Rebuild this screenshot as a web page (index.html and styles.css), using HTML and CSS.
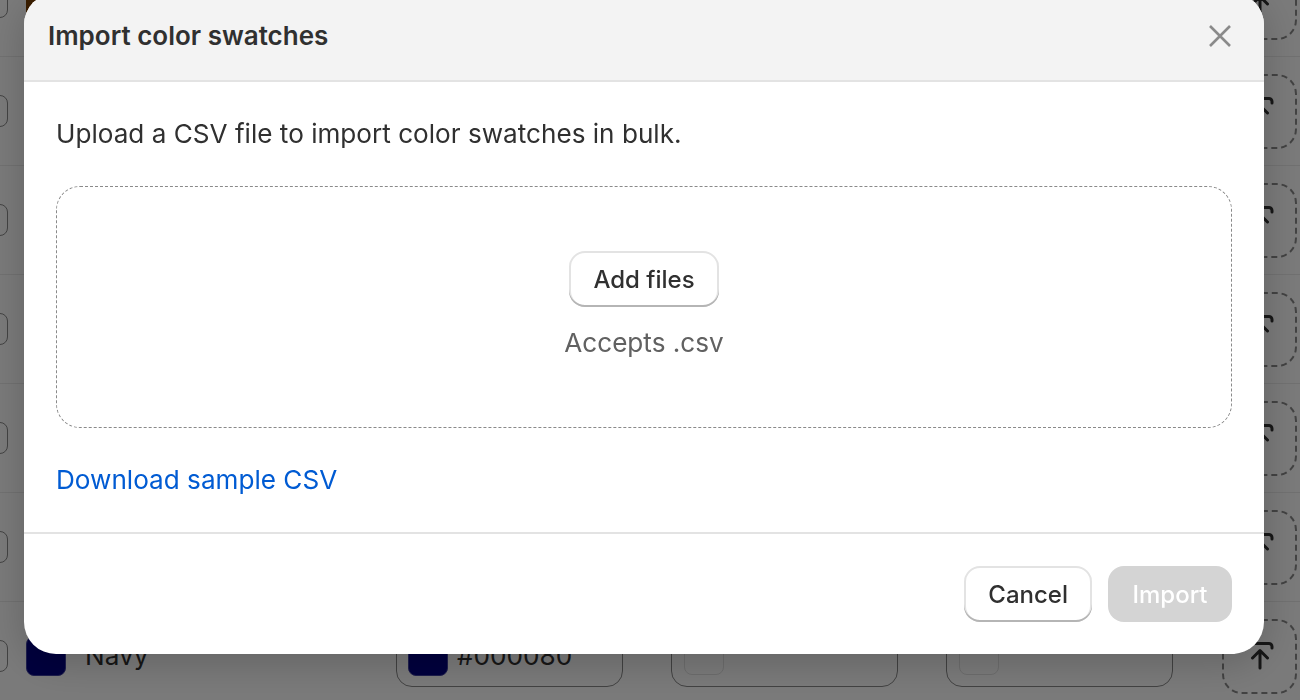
FILE: index.html
```html
<!DOCTYPE html>
<html lang="en">
<head>
    <meta charset="UTF-8">
    <title>Import color swatches</title>
    <link rel="stylesheet" href="styles.css">
</head>
<body>
    <div class="swatch-list">
        <div class="swatch-row">
            <div class="handle"></div>
            <div class="swatch swatch-brown"></div>
            <div class="upload-box">
                <svg class="upload-icon" viewBox="0 0 32 32"><path d="M4 8V6.500A3 3 0 0 1 7 3.500h18a3 3 0 0 1 3 3V8M16 28V11M8.500 18l7.500-7.500 7.500 7.500"/></svg>
            </div>
        </div>
        <div class="swatch-row">
            <div class="handle"></div>
            <div class="upload-box">
                <svg class="upload-icon" viewBox="0 0 32 32"><path d="M4 8V6.500A3 3 0 0 1 7 3.500h18a3 3 0 0 1 3 3V8M16 28V11M8.500 18l7.500-7.500 7.500 7.500"/></svg>
            </div>
        </div>
        <div class="swatch-row">
            <div class="handle"></div>
            <div class="upload-box">
                <svg class="upload-icon" viewBox="0 0 32 32"><path d="M4 8V6.500A3 3 0 0 1 7 3.500h18a3 3 0 0 1 3 3V8M16 28V11M8.500 18l7.500-7.500 7.500 7.500"/></svg>
            </div>
        </div>
        <div class="swatch-row">
            <div class="handle"></div>
            <div class="upload-box">
                <svg class="upload-icon" viewBox="0 0 32 32"><path d="M4 8V6.500A3 3 0 0 1 7 3.500h18a3 3 0 0 1 3 3V8M16 28V11M8.500 18l7.500-7.500 7.500 7.500"/></svg>
            </div>
        </div>
        <div class="swatch-row">
            <div class="handle"></div>
            <div class="upload-box">
                <svg class="upload-icon" viewBox="0 0 32 32"><path d="M4 8V6.500A3 3 0 0 1 7 3.500h18a3 3 0 0 1 3 3V8M16 28V11M8.500 18l7.500-7.500 7.500 7.500"/></svg>
            </div>
        </div>
        <div class="swatch-row">
            <div class="handle"></div>
            <div class="upload-box">
                <svg class="upload-icon" viewBox="0 0 32 32"><path d="M4 8V6.500A3 3 0 0 1 7 3.500h18a3 3 0 0 1 3 3V8M16 28V11M8.500 18l7.500-7.500 7.500 7.500"/></svg>
            </div>
        </div>
        <div class="swatch-row">
            <div class="handle"></div>
            <div class="swatch swatch-navy"></div>
            <div class="swatch-name">Navy</div>
            <div class="field">
                <div class="swatch swatch-navy"></div>
                <span class="field-text">#000080</span>
            </div>
            <div class="field">
                <div class="swatch swatch-empty"></div>
            </div>
            <div class="field">
                <div class="swatch swatch-empty"></div>
            </div>
            <div class="upload-box">
                <svg class="upload-icon" viewBox="0 0 32 32"><path d="M4 8V6.500A3 3 0 0 1 7 3.500h18a3 3 0 0 1 3 3V8M16 28V11M8.500 18l7.500-7.500 7.500 7.500"/></svg>
            </div>
        </div>
    </div>

    <div class="overlay">
        <div class="modal">
            <div class="modal-header">
                <h2>Import color swatches</h2>
                <svg class="close-icon" viewBox="0 0 22 22"><path d="M1 1l20 20M21 1L1 21"/></svg>
            </div>
            <div class="modal-body">
                <p class="intro">Upload a CSV file to import color swatches in bulk.</p>
                <div class="dropzone">
                    <button class="btn">Add files</button>
                    <div class="accepts">Accepts .csv</div>
                </div>
                <a class="sample-link" href="#">Download sample CSV</a>
            </div>
            <div class="modal-footer">
                <button class="btn btn-cancel">Cancel</button>
                <button class="btn btn-disabled">Import</button>
            </div>
        </div>
    </div>
</body>
</html>
```

FILE: styles.css
```css
html, body {
    margin: 0;
    padding: 0;
    height: 100%;
    overflow: hidden;
    background-color: #fff;
    font-family: Inter, "Liberation Sans", sans-serif;
    color: #303030;
}
.swatch-list {
    margin-top: -52px;
}
.swatch-row {
    display: flex;
    align-items: center;
    height: 108px;
    border-bottom: 1px solid #ebebeb;
    font-size: 26.130px;
}
.swatch-row:last-child {
    border-bottom: none;
}
.handle {
    width: 28px;
    height: 32px;
    margin-left: -20px;
    flex-shrink: 0;
    box-sizing: border-box;
    border: 1px solid #8a8a8a;
    border-radius: 8px;
}
.swatch {
    width: 40px;
    height: 40px;
    flex-shrink: 0;
    border-radius: 8px;
    box-sizing: border-box;
}
.swatch-row > .swatch {
    margin-left: 18px;
}
.swatch-brown {
    background-color: #7b3f00;
}
.swatch-navy {
    background-color: #000080;
    border: 1px solid #4040a0;
}
.swatch-empty {
    margin: 0 0 3px 1px;
    border: 1px solid #e3e3e3;
}
.swatch-name {
    width: 311px;
    margin: 0 0 2px 19px;
    flex-shrink: 0;
}
.field-text {
    margin-bottom: 2px;
}
.field {
    display: flex;
    align-items: center;
    gap: 9px;
    width: 227px;
    height: 62px;
    margin-right: 48px;
    padding: 0 11px;
    flex-shrink: 0;
    box-sizing: border-box;
    border: 1px solid #8a8a8a;
    border-radius: 16px;
}
.upload-box {
    display: flex;
    align-items: center;
    justify-content: center;
    width: 75px;
    height: 75px;
    margin-left: auto;
    margin-right: 3px;
    flex-shrink: 0;
    box-sizing: border-box;
    border: 2px dashed #8a8a8a;
    border-radius: 20px;
}
.upload-icon {
    width: 32px;
    height: 32px;
    fill: none;
    stroke: #303030;
    stroke-width: 3;
    stroke-linecap: round;
    stroke-linejoin: round;
}
.overlay {
    position: fixed;
    top: 0;
    left: 0;
    right: 0;
    bottom: 0;
    background-color: rgba(0, 0, 0, 0.52);
}
.modal {
    display: flex;
    flex-direction: column;
    width: 1240px;
    height: 661px;
    margin: -7px 0 0 24px;
    background-color: #fff;
    border-radius: 32px;
    overflow: hidden;
    box-shadow: 0 8px 40px rgba(0, 0, 0, 0.2);
}
.modal-header {
    display: flex;
    align-items: center;
    justify-content: space-between;
    height: 87px;
    padding: 0 33px 2px 24px;
    flex-shrink: 0;
    box-sizing: border-box;
    background-color: #f3f3f3;
}
.modal-header h2 {
    margin: 0;
    font-size: 26px;
    font-weight: 600;
    color: #303030;
}
.close-icon {
    width: 22px;
    height: 22px;
    fill: none;
    stroke: #8a8a8a;
    stroke-width: 2.600;
}
.modal-body {
    display: flex;
    flex-direction: column;
    align-items: flex-start;
    height: 454px;
    padding: 0 32px;
    flex-shrink: 0;
    box-sizing: border-box;
    border-top: 2px solid #e3e3e3;
    border-bottom: 2px solid #e3e3e3;
}
.intro {
    margin: 37px 0;
    font-size: 26.130px;
    line-height: 30px;
}
.dropzone {
    display: flex;
    flex-direction: column;
    align-items: center;
    align-self: stretch;
    height: 242px;
    padding-top: 64px;
    box-sizing: border-box;
    border: 1px dashed #8a8a8a;
    border-radius: 24px;
}
.accepts {
    margin-top: 21px;
    font-size: 26.130px;
    line-height: 30px;
    color: #616161;
}
.sample-link {
    margin-top: 37px;
    font-size: 26.130px;
    line-height: 30px;
    color: #005bd3;
    text-decoration: none;
}
.modal-footer {
    display: flex;
    justify-content: flex-end;
    gap: 16px;
    padding: 32px;
}
.btn {
    height: 56px;
    padding: 0 24px;
    font-family: inherit;
    font-size: 24px;
    font-weight: 550;
    color: #303030;
    background-color: #fff;
    border: none;
    border-radius: 16px;
    box-shadow: inset 0 -2px 0 #b5b5b5, inset 0 0 0 2px #e3e3e3;
    cursor: pointer;
}
.btn-disabled {
    padding: 0 24.500px;
    color: #fff;
    background-color: #d4d4d4;
    box-shadow: none;
}
```
